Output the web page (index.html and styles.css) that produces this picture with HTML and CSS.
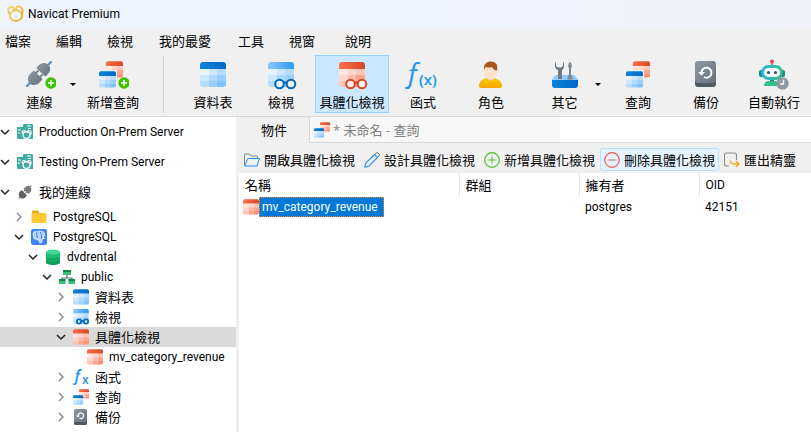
FILE: index.html
```
<!DOCTYPE html>
<html lang="zh-Hant">
<head>
    <meta charset="UTF-8">
    <title>Navicat Premium</title>
    <link rel="stylesheet" href="styles.css">
</head>
<body>
    <svg class="defs" aria-hidden="true">
        <defs>
            <linearGradient id="g-blue"><stop offset="0" stop-color="#0c84dc"/><stop offset="1" stop-color="#0068c4"/></linearGradient>
            <linearGradient id="g-sky"><stop offset="0" stop-color="#8ac8fb"/><stop offset="1" stop-color="#2f98f3"/></linearGradient>
            <linearGradient id="g-red"><stop offset="0" stop-color="#ff6d47"/><stop offset="1" stop-color="#d34a26"/></linearGradient>
            <linearGradient id="g-gray" x2="1" y2="1"><stop offset="0" stop-color="#8d98a2"/><stop offset="1" stop-color="#67727c"/></linearGradient>
            <linearGradient id="g-body" x2="0" y2="1"><stop offset="0" stop-color="#fdc800"/><stop offset="1" stop-color="#f5a800"/></linearGradient>
            <linearGradient id="g-robot"><stop offset="0" stop-color="#2fb5e0"/><stop offset="1" stop-color="#2fbf82"/></linearGradient>
            <linearGradient id="g-gold" x2="1" y2="1"><stop offset="0" stop-color="#f3dc7e"/><stop offset="1" stop-color="#e6a91c"/></linearGradient>
            <clipPath id="round"><rect width="26" height="25" rx="3"/></clipPath>
        </defs>

        <symbol id="cells-blue" viewBox="0 0 26 25">
            <g clip-path="url(#round)">
                <path fill="#e6f3ff" d="M0 7h9v6H0z"/>
                <path fill="#cde7ff" d="M9 7h8v6H9zM0 13h9v6H0z"/>
                <path fill="#b8dcff" d="M17 7h9v6h-9zM0 19h9v6H0z"/>
                <path fill="#aed8ff" d="M9 13h8v6H9z"/>
                <path fill="#9bcfff" d="M17 13h9v6h-9zM9 19h8v6H9z"/>
                <path fill="#80c2ff" d="M17 19h9v6h-9z"/>
            </g>
        </symbol>
        <symbol id="cells-red" viewBox="0 0 26 25">
            <g clip-path="url(#round)">
                <path fill="#ffe6df" d="M0 7h9v6H0z"/>
                <path fill="#ffd6cb" d="M9 7h8v6H9zM0 13h9v6H0z"/>
                <path fill="#ffc6b8" d="M17 7h9v6h-9zM0 19h9v6H0z"/>
                <path fill="#ffbaa8" d="M9 13h8v6H9z"/>
                <path fill="#ffa48d" d="M17 13h9v6h-9zM9 19h8v6H9z"/>
                <path fill="#ff9074" d="M17 19h9v6h-9z"/>
            </g>
        </symbol>
        <symbol id="table-blue" viewBox="0 0 26 25">
            <use href="#cells-blue" width="26" height="25"/>
            <path fill="url(#g-blue)" d="M0 7V3a3 3 0 0 1 3-3h20a3 3 0 0 1 3 3v4z"/>
        </symbol>
        <symbol id="table-sky" viewBox="0 0 26 25">
            <use href="#cells-blue" width="26" height="25"/>
            <path fill="url(#g-sky)" d="M0 7V3a3 3 0 0 1 3-3h20a3 3 0 0 1 3 3v4z"/>
        </symbol>
        <symbol id="table-red" viewBox="0 0 26 25">
            <use href="#cells-red" width="26" height="25"/>
            <path fill="url(#g-red)" d="M0 7V3a3 3 0 0 1 3-3h20a3 3 0 0 1 3 3v4z"/>
        </symbol>
        <symbol id="add" viewBox="0 0 12 12">
            <circle cx="6" cy="6" r="5.7" fill="#3fc100"/>
            <path d="M6 3v6M3 6h6" stroke="#fff" stroke-width="1.4"/>
        </symbol>
        <symbol id="plug" viewBox="0 0 26 26">
            <path d="M1 25l5-5M20 6l5-5" stroke="#5b8fc0" stroke-width="2.2" stroke-linecap="round"/>
            <path d="M3.500 22.500c-3-4-1.500-8 2-11l2.500-2 8.500 8.500-2 2.500c-3 3.500-7 5-11 2z" fill="url(#g-gray)"/>
            <path d="M22.500 3.500c3 4 1.500 8-2 11l-2 1.500-8.500-8.500 1.500-2c3-3.500 7-5 11-2z" fill="url(#g-gray)"/>
            <path d="M8 10l8.500 8.500" stroke="#efefef" stroke-width="0"/>
            <path d="M9.500 7l10 10" stroke="#efefef" stroke-width="1.300"/>
            <path d="M9.500 12.500l3-3M13.500 16.500l3-3" stroke="#7c8791" stroke-width="2"/>
        </symbol>
        <symbol id="plug-dark" viewBox="0 0 16 16">
            <path d="M1.500 14.500l3-3M12 4l2.500-2.500" stroke="#999" stroke-width="1.400"/>
            <path d="M3 13.500c-2-2.500-1.500-4.500 0-6l1.500-1.500 5.500 5.500-1.500 1.500c-1.500 1.500-3.500 2.500-5.500.500z" fill="#5f5f5f"/>
            <path d="M13 2.500c2 2.500 1.500 4.500 0 6l-1.500 1.500L6.500 5 8 3.500C9.500 2 11.500.800 13 2.500z" fill="#777"/>
            <path d="M6.500 7.500L8.500 6M8.500 9.500l1.500-2" stroke="#777" stroke-width="1.200"/>
        </symbol>

        <symbol id="i-connect" viewBox="0 0 32 32">
            <use href="#plug" x="2" y="2" width="26" height="26"/>
            <use href="#add" x="21" y="18" width="12" height="12"/>
        </symbol>
        <symbol id="i-newquery" viewBox="0 0 32 32">
            <use href="#table-red" x="9" y="2" width="17" height="17"/>
            <path fill="#efefef" d="M1 11h19v9H1z"/>
            <use href="#table-blue" x="2" y="12" width="17" height="17"/>
            <use href="#add" x="21" y="18" width="12" height="12"/>
        </symbol>
        <symbol id="i-table" viewBox="0 0 32 32">
            <use href="#table-blue" x="3" y="3" width="26" height="25"/>
        </symbol>
        <symbol id="i-view" viewBox="0 0 32 32">
            <use href="#table-sky" x="3" y="3" width="26" height="25"/>
            <g fill="#eaf5ff" stroke="#0068b8" stroke-width="2"><circle cx="14.500" cy="25" r="4.300"/><circle cx="26" cy="25" r="4.300"/><path d="M18.500 24q1.700-1 3.500 0"/></g>
        </symbol>
        <symbol id="i-mview" viewBox="0 0 32 32">
            <use href="#table-red" x="3" y="3" width="26" height="25"/>
            <g fill="#ffeee9" stroke="#d04a26" stroke-width="2"><circle cx="14.500" cy="25" r="4.300"/><circle cx="26" cy="25" r="4.300"/><path d="M18.500 24q1.700-1 3.500 0"/></g>
        </symbol>
        <symbol id="i-role" viewBox="0 0 32 32">
            <path d="M4 27c0-5 4-7 8-8h6c5 1 9 3 9 8q0 2-2 2H6q-2 0-2-2z" fill="url(#g-body)"/>
            <path d="M12 17h7v3q-3.500 3-7 0z" fill="#f7d0b0"/>
            <ellipse cx="15.500" cy="13" rx="6.500" ry="7.500" fill="#ffe3cc"/>
            <path d="M9 11c-1-6 3-8.500 7-8.500 4.500 0 7.500 3 6 9-3 0-4-2-5-3.500-1.500 1-5 .5-6 0-1 .5-1.500 2-2 3z" fill="#a9571d"/>
        </symbol>
        <symbol id="i-other" viewBox="0 0 32 32">
            <path d="M3 21l2-3q1-2 3-2h16q2 0 3 2l2 3z" fill="#8fcaff"/>
            <path d="M9 20V11C6 10 5 6 7 2.500V7l2 1.500h3L14 7V2.500C16 6 15 10 13 11v9z" fill="#6d7984"/>
            <path d="M20 3.500h2q1.500 3 0 6v6q2 2 1.500 5h-5q-.5-3 1.500-5v-6q-1.500-3 0-6z" fill="#7d8993"/>
            <path d="M3 21h26v5q0 3-3 3H6q-3 0-3-3z" fill="url(#g-blue)"/>
        </symbol>
        <symbol id="i-query" viewBox="0 0 32 32">
            <use href="#table-red" x="11" y="2" width="17" height="17"/>
            <path fill="#efefef" d="M3 11h19v9H3z"/>
            <use href="#table-blue" x="4" y="12" width="17" height="17"/>
        </symbol>
        <symbol id="i-backup" viewBox="0 0 32 32">
            <rect x="5" y="5" width="21" height="23" rx="3" fill="#4f5960"/>
            <rect x="5" y="2" width="21" height="22" rx="3" fill="url(#g-gray)"/>
            <path d="M11.500 13a5 5 0 1 1 2.500 5" fill="none" stroke="#fff" stroke-width="2"/>
            <path d="M8 13h7l-3.500 3.500z" fill="#fff"/>
        </symbol>
        <symbol id="i-robot" viewBox="0 0 32 32">
            <path d="M14 2v5" stroke="#4a9a96" stroke-width="1.500"/>
            <circle cx="14" cy="2.500" r="2" fill="#f0414b"/>
            <rect x="1" y="11" width="26" height="7" rx="2" fill="#178a86"/>
            <path d="M12 20h4v3h-4z" fill="#178a86"/>
            <path d="M6 27q0-5 5-5h6q5 0 5 5z" fill="#2fc08a"/>
            <rect x="3" y="6" width="22" height="15" rx="7.500" fill="url(#g-robot)"/>
            <rect x="6" y="9" width="16" height="9" rx="4.500" fill="#fff"/>
            <circle cx="10.500" cy="13.500" r="1.600" fill="#23507f"/><circle cx="17.500" cy="13.500" r="1.600" fill="#23507f"/>
            <circle cx="24.500" cy="24.500" r="6.200" fill="#8d99a4"/>
            <path d="M25.500 20.500V25H22" fill="none" stroke="#fff" stroke-width="1.400"/>
        </symbol>

        <symbol id="t-server" viewBox="0 0 16 16">
            <path d="M0 3h6V1q0-1 1-1h8q1 0 1 1v14H1q-1 0-1-1z" fill="#41aaa5"/>
            <path d="M1 6h3M1 9h2M10 2h4M11 4.500h3" stroke="#fff"/>
            <g fill="none" stroke="#fff" stroke-width="1.200"><circle cx="9.500" cy="11" r="3.400"/><path d="M6 10q-2-3 1-3.500 2 0 2 2M10 8.500q1-3 3.500-1.500 1.500 2-.5 4"/></g>
        </symbol>
        <symbol id="t-folder" viewBox="0 0 16 16">
            <path d="M1 3q0-1.500 1-1.500h5L8.500 4H15v3H1z" fill="#e9a100"/>
            <rect x="0.500" y="4" width="15" height="10" rx="1" fill="#ffc933"/>
        </symbol>
        <symbol id="t-pg" viewBox="0 0 16 16">
            <rect width="16" height="16" rx="2" fill="#3f83f5"/>
            <path d="M4 2.500C2 3 2 5 2.500 7.500S4 11 5 10l1-1v2h2c.3 2 .5 3.500 2 3 1.200-.3 1-2 1-4l2.500-.500-1-1c1-2 1.500-4 .5-5C12 2 10.500 2.500 9.500 2.500 8 1.800 7 2 6 3z" fill="#b9d3ff" stroke="#fff" stroke-width=".700"/>
            <path d="M6 3q-1 3 .5 6M9.500 3q1.500 3 1 7" fill="none" stroke="#3f83f5"/>
        </symbol>
        <symbol id="t-db" viewBox="0 0 16 16">
            <path d="M1 3v10.500C1 15 4 16 8 16s7-1 7-2.500V3z" fill="#119a5a"/>
            <path d="M1 3v8c1 1.500 4 2 7 2s6-.5 7-2V3z" fill="#12a963"/>
            <path d="M1 3v4c1 1.500 4 2 7 2s6-.5 7-2V3z" fill="#1fbd74"/>
            <ellipse cx="8" cy="3" rx="7" ry="2.500" fill="#43d795"/>
        </symbol>
        <symbol id="t-schema" viewBox="0 0 16 16">
            <path d="M8 6v3M3 12V9h10v3" fill="none" stroke="#5d6b72" stroke-width="1.200"/>
            <path d="M4 1h8v5H4zM0 10h6.500v5H0zM9.500 10H16v5H9.500z" fill="#3bbd7e"/>
            <path d="M4 1h8v2H4zM0 10h6.500v2H0zM9.500 10H16v2H9.500z" fill="#0c8a4d"/>
        </symbol>
        <symbol id="t-table" viewBox="0 0 16 16"><use href="#table-blue" width="16" height="16"/></symbol>
        <symbol id="t-view" viewBox="0 0 16 16">
            <use href="#table-sky" width="16" height="15"/>
            <g fill="#d8edff" stroke="#0068b8" stroke-width="1.700"><circle cx="6" cy="12.500" r="2.200"/><circle cx="13" cy="12.500" r="2.200"/><path d="M8 12h3"/></g>
        </symbol>
        <symbol id="t-mview" viewBox="0 0 16 16"><use href="#table-red" width="16" height="16"/></symbol>
        <symbol id="t-query" viewBox="0 0 16 16">
            <use href="#table-red" x="6" y="0" width="10" height="10"/>
            <use href="#table-blue" x="0" y="6" width="10" height="10"/>
        </symbol>
        <symbol id="t-backup" viewBox="0 0 16 16">
            <rect x="1" y="1" width="13" height="15" rx="1.500" fill="#4f5960"/>
            <rect x="1" y="0" width="13" height="13" rx="1.500" fill="url(#g-gray)"/>
            <path d="M5 6.500a2.800 2.800 0 1 1 1.500 2.700" fill="none" stroke="#fff" stroke-width="1.200"/>
            <path d="M3 6.500h4L5 8.500z" fill="#fff"/>
        </symbol>

        <symbol id="o-open" viewBox="0 0 16 16">
            <path d="M.500 14V2h5l1.500 2h6.500v2.500" fill="none" stroke="#8a8a8a"/>
            <path d="M.800 14l3-7.500h11.700l-2.500 7.500z" fill="none" stroke="#1e90ff" stroke-linejoin="round"/>
        </symbol>
        <symbol id="o-design" viewBox="0 0 16 16">
            <path d="M.800 15.200l1-4L10.500 2.500l3 3-8.700 8.700z" fill="none" stroke="#1e90ff" stroke-width="1.100" stroke-linejoin="round"/>
            <path d="M10.500 2.500l1.500-1.500q1-.8 2 0l1 1q.8 1 0 2L13.500 5.500" fill="none" stroke="#777"/>
        </symbol>
        <symbol id="o-new" viewBox="0 0 16 16">
            <circle cx="8" cy="8" r="7.300" fill="none" stroke="#4cbf28" stroke-width="1.200"/>
            <path d="M8 4.500v7M4.500 8h7" stroke="#4cbf28"/>
        </symbol>
        <symbol id="o-delete" viewBox="0 0 16 16">
            <circle cx="8" cy="8" r="7.300" fill="none" stroke="#f2564b" stroke-width="1.200"/>
            <path d="M4.500 8h7" stroke="#f2564b"/>
        </symbol>
        <symbol id="o-export" viewBox="0 0 16 16">
            <path d="M12.500 8V3q0-2-2-2h-8q-2 0-2 2v9q0 2 2 2H5" fill="none" stroke="#8a8a8a" stroke-width="1.100"/>
            <path d="M6 8.500q.5 3.500 4 3.500h5M12 9l3 3-3 3" fill="none" stroke="#f5a21b" stroke-width="1.300"/>
        </symbol>
        <symbol id="open" viewBox="0 0 10 10"><path d="M1 3l4 4 4-4" fill="none" stroke="#222" stroke-width="1.500"/></symbol>
        <symbol id="closed" viewBox="0 0 10 10"><path d="M3 1l4 4-4 4" fill="none" stroke="#888" stroke-width="1.400"/></symbol>
    </svg>

    <header class="titlebar">
        <svg class="logo" viewBox="0 0 16 16" fill="none" stroke="url(#g-gold)" stroke-width="1.800">
            <ellipse cx="8.500" cy="10" rx="5.700" ry="5"/>
            <path d="M3 9C0 6 1 2 4 1.500c2.500 0 3 2.500 2 4.500M8.500 5C8 2 10 .500 12 1.500c3 1.500 3.500 5 1.500 7"/>
        </svg>
        <span class="latin">Navicat Premium</span>
    </header>

    <nav class="menubar">
        <button>檔案</button>
        <button>編輯</button>
        <button>檢視</button>
        <button>我的最愛</button>
        <button>工具</button>
        <button>視窗</button>
        <button>說明</button>
    </nav>

    <div class="toolbar">
        <button class="tool split"><svg><use href="#i-connect"/></svg>連線</button>
        <button class="tool"><svg><use href="#i-newquery"/></svg>新增查詢</button>
        <span class="separator"></span>
        <button class="tool"><svg><use href="#i-table"/></svg>資料表</button>
        <button class="tool"><svg><use href="#i-view"/></svg>檢視</button>
        <button class="tool active"><svg><use href="#i-mview"/></svg>具體化檢視</button>
        <button class="tool"><svg class="glyph" viewBox="0 0 32 32"><text class="italic" x="-2" y="23" font-size="28">ƒ</text><text class="semi" x="12" y="26" font-size="15">(x)</text></svg>函式</button>
        <button class="tool"><svg><use href="#i-role"/></svg>角色</button>
        <button class="tool split"><svg><use href="#i-other"/></svg>其它</button>
        <button class="tool"><svg><use href="#i-query"/></svg>查詢</button>
        <button class="tool"><svg><use href="#i-backup"/></svg>備份</button>
        <button class="tool"><svg><use href="#i-robot"/></svg>自動執行</button>
    </div>

    <main class="workspace">
        <ul class="tree">
            <li class="root"><button class="toggle" aria-label="Production"><svg><use href="#open"/></svg></button><svg class="icon"><use href="#t-server"/></svg><span class="latin">Production On-Prem Server</span></li>
            <li class="root"><button class="toggle" aria-label="Testing"><svg><use href="#open"/></svg></button><svg class="icon"><use href="#t-server"/></svg><span class="latin">Testing On-Prem Server</span></li>
            <li class="root"><button class="toggle" aria-label="我的連線"><svg><use href="#open"/></svg></button><svg class="icon"><use href="#plug-dark"/></svg><span>我的連線</span></li>
            <li class="level1"><button class="toggle" aria-label="PostgreSQL"><svg><use href="#closed"/></svg></button><svg class="icon"><use href="#t-folder"/></svg><span class="latin">PostgreSQL</span></li>
            <li class="level1"><button class="toggle" aria-label="PostgreSQL"><svg><use href="#open"/></svg></button><svg class="icon"><use href="#t-pg"/></svg><span class="latin">PostgreSQL</span></li>
            <li class="level2"><button class="toggle" aria-label="dvdrental"><svg><use href="#open"/></svg></button><svg class="icon"><use href="#t-db"/></svg><span class="latin">dvdrental</span></li>
            <li class="level3"><button class="toggle" aria-label="public"><svg><use href="#open"/></svg></button><svg class="icon"><use href="#t-schema"/></svg><span class="latin">public</span></li>
            <li class="level4"><button class="toggle" aria-label="資料表"><svg><use href="#closed"/></svg></button><svg class="icon"><use href="#t-table"/></svg><span>資料表</span></li>
            <li class="level4"><button class="toggle" aria-label="檢視"><svg><use href="#closed"/></svg></button><svg class="icon"><use href="#t-view"/></svg><span>檢視</span></li>
            <li class="level4 selected"><button class="toggle" aria-label="具體化檢視"><svg><use href="#open"/></svg></button><svg class="icon"><use href="#t-mview"/></svg><span>具體化檢視</span></li>
            <li class="level5 leaf"><svg class="icon"><use href="#t-mview"/></svg><span class="latin">mv_category_revenue</span></li>
            <li class="level4"><button class="toggle" aria-label="函式"><svg><use href="#closed"/></svg></button><svg class="icon glyph" viewBox="0 0 16 16"><text class="italic semi" x="0" y="12" font-size="16">ƒ</text><text class="semi" x="9" y="15" font-size="12">x</text></svg><span>函式</span></li>
            <li class="level4"><button class="toggle" aria-label="查詢"><svg><use href="#closed"/></svg></button><svg class="icon"><use href="#t-query"/></svg><span>查詢</span></li>
            <li class="level4"><button class="toggle" aria-label="備份"><svg><use href="#closed"/></svg></button><svg class="icon"><use href="#t-backup"/></svg><span>備份</span></li>
        </ul>

        <section class="content">
            <div class="tabs">
                <button class="tab current">物件</button>
                <button class="tab"><svg class="icon"><use href="#t-query"/></svg>* 未命名 - 查詢</button>
            </div>
            <div class="actions">
                <button><svg class="icon"><use href="#o-open"/></svg>開啟具體化檢視</button>
                <button><svg class="icon"><use href="#o-design"/></svg>設計具體化檢視</button>
                <button><svg class="icon"><use href="#o-new"/></svg>新增具體化檢視</button>
                <button class="hover"><svg class="icon"><use href="#o-delete"/></svg>刪除具體化檢視</button>
                <button><svg class="icon"><use href="#o-export"/></svg>匯出精靈</button>
            </div>
            <table class="objects">
                <thead>
                    <tr><th class="name">名稱</th><th class="group">群組</th><th class="owner">擁有者</th><th class="latin">OID</th></tr>
                </thead>
                <tbody>
                    <tr>
                        <td><div class="object"><svg class="icon"><use href="#t-mview"/></svg><span class="picked latin">mv_category_revenue</span></div></td>
                        <td></td>
                        <td class="latin">postgres</td>
                        <td class="latin">42151</td>
                    </tr>
                </tbody>
            </table>
        </section>
    </main>
</body>
</html>
```
FILE: styles.css
```
* {
    box-sizing: border-box;
}
body {
    margin: 0;
    min-height: 100vh;
    display: flex;
    flex-direction: column;
    background: #f0f0f0;
    color: #000;
    font-family: "Open Sans", "Noto Sans CJK TC", sans-serif;
    font-size: 13px;
    line-height: 20px;
    white-space: nowrap;
    overflow: hidden;
}
button {
    margin: 0;
    padding: 0;
    border: 0;
    background: none;
    color: inherit;
    font: inherit;
    white-space: nowrap;
}
svg {
    display: block;
    flex: none;
}
.defs {
    position: absolute;
    width: 0;
    height: 0;
}
.glyph {
    overflow: visible;
    fill: #2196f3;
    font-family: "Open Sans", sans-serif;
}
.italic {
    font-style: italic;
}
.semi {
    font-weight: 600;
}
.icon {
    width: 16px;
    height: 16px;
}
.latin {
    font-family: Roboto, "Open Sans", sans-serif;
    font-size: 12px;
}

.titlebar {
    display: flex;
    align-items: center;
    gap: 4px;
    height: 29px;
    padding: 0 7px 2px;
    background: linear-gradient(90deg, #eff3fc 50%, #f0f2f8);
}
.logo {
    width: 17px;
    height: 17px;
}

.menubar {
    display: grid;
    grid-template-columns: 51px 51px 52px 79px 51px 56px auto;
    justify-content: start;
    padding: 2px 5px 4px;
}
.menubar button {
    text-align: left;
}

.toolbar {
    display: flex;
    height: 62px;
    padding-bottom: 3px;
    border-bottom: 1px solid #d9d9d9;
}
.tool {
    display: flex;
    flex-direction: column;
    align-items: center;
    gap: 1px;
    flex: none;
    min-width: 68px;
    padding: 3px 3px 0;
    border: 1px solid transparent;
}
.tool svg {
    width: 32px;
    height: 32px;
    overflow: visible;
}
.tool.active {
    min-width: 74px;
    border-color: #99d1ff;
    background: #cce8ff;
}
.split {
    position: relative;
    width: 79px;
}
.split::after {
    content: "";
    position: absolute;
    right: 2px;
    top: 27px;
    border: 3px solid transparent;
    border-top-color: #000;
    border-bottom: 0;
}
.separator {
    width: 1px;
    margin: 1px 15px 0 16px;
    background: #d5d5d5;
}

.workspace {
    display: flex;
    flex: 1;
}
.tree {
    width: 236px;
    flex: none;
    margin: 0;
    padding: 0;
    list-style: none;
    background: #fff;
}
.tree li {
    display: flex;
    align-items: center;
    height: 20px;
}
.tree .root {
    height: 30px;
}
.tree .level1 { padding-left: 14px; }
.tree .level2 { padding-left: 28px; }
.tree .level3 { padding-left: 42px; }
.tree .level4 { padding-left: 56px; }
.tree .level5 { padding-left: 70px; }
.tree .icon {
    margin-right: 6px;
}
.tree .leaf .icon {
    margin-left: 17px;
}
.tree .selected {
    background: #d9d9d9;
}
.toggle {
    width: 17px;
}
.toggle svg {
    width: 10px;
    height: 10px;
}

.content {
    flex: 1;
    min-width: 0;
    margin-left: 3px;
    background: #fff;
}
.tabs {
    display: flex;
    height: 26px;
    border-bottom: 1px solid #d9d9d9;
}
.tab {
    display: flex;
    align-items: center;
    gap: 3px;
    width: 250px;
    padding: 0 4px;
    background: #f7f7f7;
    color: #808080;
}
.tab.current {
    justify-content: center;
    width: 71px;
    margin-bottom: -1px;
    border-right: 1px solid #d9d9d9;
    background: #f0f0f0;
    color: #000;
}
.actions {
    display: flex;
    gap: 1px;
    padding: 5px 1px 2px;
    background: #f0f0f0;
}
.actions button {
    display: flex;
    align-items: center;
    gap: 4px;
    height: 23px;
    padding: 0 3px;
    border: 1px solid transparent;
    border-radius: 2px;
}
.actions .hover {
    border-color: #bfe0fa;
    background: #e5f3ff;
}

.objects {
    width: 100%;
    table-layout: fixed;
    border-collapse: collapse;
    text-align: left;
}
.objects th {
    height: 24px;
    padding: 0 6px;
    border-right: 1px solid #e5e5e5;
    font-weight: normal;
}
.objects th:last-child {
    border-right: 0;
}
.objects .name {
    width: 220px;
}
.objects .group,
.objects .owner {
    width: 120px;
}
.objects td {
    height: 20px;
    padding: 0 6px;
}
.objects td:first-child {
    padding: 0 4px;
}
.object {
    display: flex;
    align-items: center;
}
.picked {
    height: 20px;
    padding: 0 5px 0 2px;
    border: 1px dotted #ff8728;
    background: #0078d7;
    color: #fff;
    line-height: 18px;
}
```
